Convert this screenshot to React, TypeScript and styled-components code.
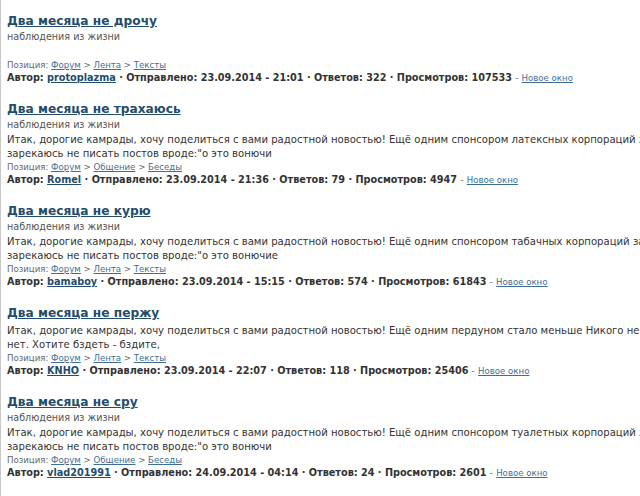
import React from 'react';
import styled, { createGlobalStyle } from 'styled-components';

const GlobalStyle = createGlobalStyle`
  html, body {
    margin: 0;
    padding: 0;
    background: #fff;
    overflow: hidden;
  }
`;

interface IPost {
  title: string;
  subtitle?: string;
  lines: string[];
  crumbs: string[];
  author: string;
  date: string;
  replies: number;
  views: number;
}

const posts: IPost[] = [
  {
    title: 'Два месяца не дрочу',
    subtitle: 'наблюдения из жизни',
    lines: ['\u00a0'],
    crumbs: ['Форум', 'Лента', 'Тексты'],
    author: 'protoplazma',
    date: '23.09.2014 - 21:01',
    replies: 322,
    views: 107533,
  },
  {
    title: 'Два месяца не трахаюсь',
    subtitle: 'наблюдения из жизни',
    lines: [
      'Итак, дорогие камрады, хочу поделиться с вами радостной новостью! Ещё одним спонсором латексных корпораций за',
      'зарекаюсь не писать постов вроде:"о это вонючи',
    ],
    crumbs: ['Форум', 'Общение', 'Беседы'],
    author: 'Romel',
    date: '23.09.2014 - 21:36',
    replies: 79,
    views: 4947,
  },
  {
    title: 'Два месяца не курю',
    subtitle: 'наблюдения из жизни',
    lines: [
      'Итак, дорогие камрады, хочу поделиться с вами радостной новостью! Ещё одним спонсором табачных корпораций за',
      'зарекаюсь не писать постов вроде:"о это вонючие',
    ],
    crumbs: ['Форум', 'Лента', 'Тексты'],
    author: 'bamaboy',
    date: '23.09.2014 - 15:15',
    replies: 574,
    views: 61843,
  },
  {
    title: 'Два месяца не пержу',
    lines: [
      'Итак, дорогие камрады, хочу поделиться с вами радостной новостью! Ещё одним пердуном стало меньше Никого не',
      'нет. Хотите бздеть - бздите,',
    ],
    crumbs: ['Форум', 'Лента', 'Тексты'],
    author: 'KNHO',
    date: '23.09.2014 - 22:07',
    replies: 118,
    views: 25406,
  },
  {
    title: 'Два месяца не сру',
    subtitle: 'наблюдения из жизни',
    lines: [
      'Итак, дорогие камрады, хочу поделиться с вами радостной новостью! Ещё одним спонсором туалетных корпораций за',
      'зарекаюсь не писать постов вроде:"о это вонючи',
    ],
    crumbs: ['Форум', 'Общение', 'Беседы'],
    author: 'vlad201991',
    date: '24.09.2014 - 04:14',
    replies: 24,
    views: 2601,
  },
];

const PostItem = ({ post }: { post: IPost }) => {
  return (
    <Post>
      <Title href="#">{post.title}</Title>
      {post.subtitle && <Subtitle>{post.subtitle}</Subtitle>}
      <Body>
        {post.lines.map((line, i) => (
          <BodyLine key={i}>{line}</BodyLine>
        ))}
      </Body>
      <Position>
        Позиция:{' '}
        {post.crumbs.map((c, i) => (
          <React.Fragment key={i}>
            {i > 0 && ' > '}
            <SmallLink href="#">{c}</SmallLink>
          </React.Fragment>
        ))}
      </Position>
      <Meta>
        Автор: <AuthorLink href="#">{post.author}</AuthorLink> · Отправлено:{' '}
        {post.date} · Ответов: {post.replies} · Просмотров: {post.views}
        <Dash> - </Dash>
        <SmallLink href="#">Новое окно</SmallLink>
      </Meta>
    </Post>
  );
};

const App = () => {
  return (
    <Page>
      <GlobalStyle />
      {posts.map((p, i) => (
        <PostItem key={i} post={p} />
      ))}
    </Page>
  );
};

export default App;

const Page = styled.div`
  width: 640px;
  height: 496px;
  box-sizing: border-box;
  border-left: 1px solid #c8c8c8;
  padding: 13px 0 0 6px;
  overflow: hidden;
  font-family: 'DejaVu Sans', Verdana, sans-serif;
  color: #333;
`;

const Post = styled.div`
  display: flex;
  flex-direction: column;
  align-items: flex-start;
  margin-bottom: 16px;
`;

const Title = styled.a`
  font-size: 12.2px;
  line-height: 17px;
  font-weight: bold;
  color: #1f4d6b;
  text-decoration: underline;
`;

const Subtitle = styled.div`
  font-size: 9.6px;
  line-height: 13px;
  color: #555;
`;

const Body = styled.div`
  margin-top: 2px;
  width: 640px;
  overflow: hidden;
`;

const BodyLine = styled.div`
  font-size: 10.1px;
  line-height: 14px;
  color: #333;
  white-space: nowrap;
`;

const Position = styled.div`
  font-size: 8.6px;
  line-height: 12px;
  color: #666;
`;

const SmallLink = styled.a`
  font-size: 8.6px;
  font-weight: normal;
  color: #3d6f96;
  text-decoration: underline;
`;

const Meta = styled.div`
  font-size: 9.7px;
  line-height: 14px;
  font-weight: bold;
  color: #333;
  white-space: nowrap;
`;

const AuthorLink = styled.a`
  color: #1f4d6b;
  text-decoration: underline;
`;

const Dash = styled.span`
  font-weight: normal;
  color: #888;
`;
